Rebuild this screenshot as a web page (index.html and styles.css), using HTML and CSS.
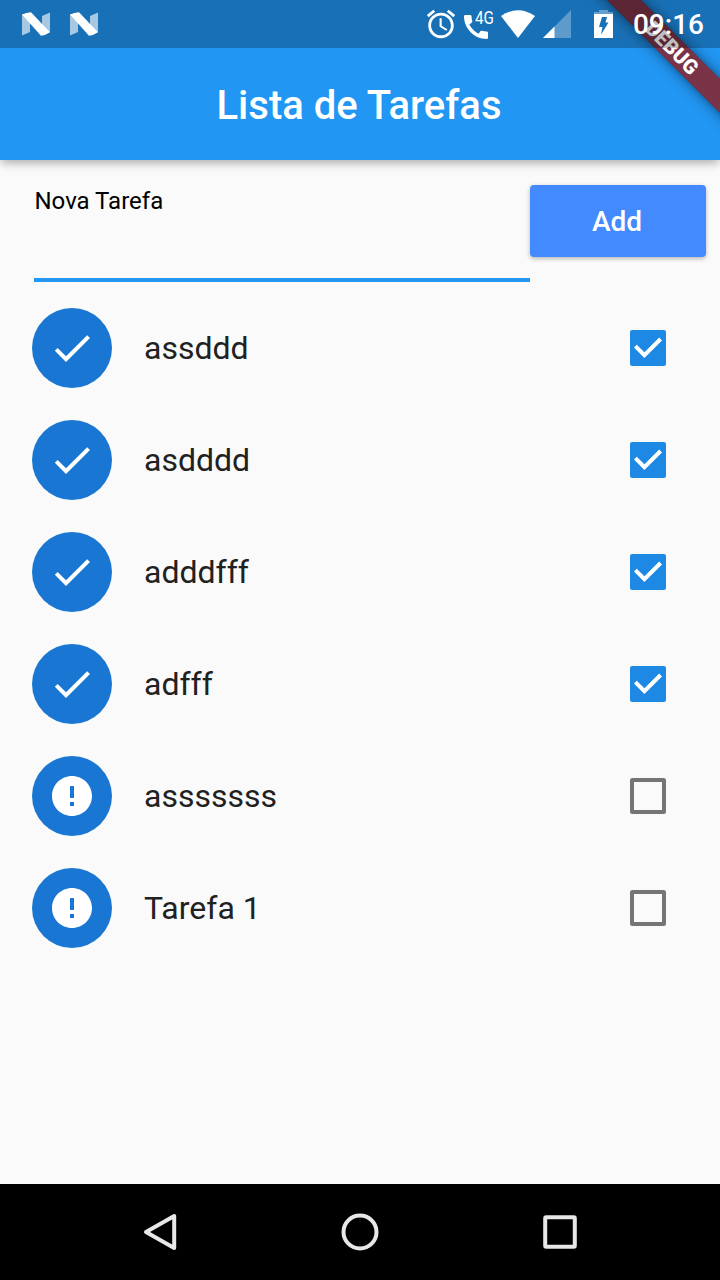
FILE: index.html
```html
<!DOCTYPE html>
<html lang="pt">
<head>
<meta charset="utf-8">
<title>Lista de Tarefas</title>
<link rel="stylesheet" href="styles.css">
</head>
<body>
<svg class="defs" width="0" height="0">
  <symbol id="check" viewBox="0 0 24 24"><path d="M9 16.17L4.83 12l-1.42 1.41L9 19 21 7l-1.41-1.41z"/></symbol>
  <symbol id="error" viewBox="0 0 24 24"><path d="M12 2C6.48 2 2 6.48 2 12s4.48 10 10 10 10-4.48 10-10S17.52 2 12 2zm1 15h-2v-2h2v2zm0-4h-2V7h2v6z"/></symbol>
  <symbol id="box-on" viewBox="0 0 36 36"><rect width="36" height="36" rx="2" fill="#1e88e5"/><path d="M5.4 16.2L14.4 25.2 30.6 9" fill="none" stroke="#fff" stroke-width="4"/></symbol>
  <symbol id="box-off" viewBox="0 0 36 36"><rect x="2" y="2" width="32" height="32" rx="0.5" fill="none" stroke="#757575" stroke-width="4"/></symbol>
  <symbol id="nougat" viewBox="0 0 28 24"><path d="M0 2L8 6V20L0 23.5zM20 4L28 .5V20L20 22z" fill="#fff" fill-opacity=".62"/><path d="M0 2.5Q4 .5 9 .2L28 20.2Q24 23 19 23.700z" fill="#fff"/></symbol>
</svg>
<div class="screen">
  <header class="top">
    <div class="status">
      <svg class="n-icon"><use href="#nougat"/></svg>
      <svg class="n-icon"><use href="#nougat"/></svg>
      <svg class="alarm" viewBox="0 0 24 24"><path d="M22 5.72l-4.6-3.86-1.29 1.53 4.6 3.86L22 5.72zM7.88 3.39L6.6 1.86 2 5.71l1.29 1.53 4.59-3.85zM12.5 8H11v6l4.75 2.85.75-1.23-4-2.37V8zM12 4c-4.97 0-9 4.03-9 9s4.02 9 9 9c4.97 0 9-4.03 9-9s-4.03-9-9-9zm0 16c-3.87 0-7-3.13-7-7s3.13-7 7-7 7 3.13 7 7-3.13 7-7 7z"/></svg>
      <div class="phone">
        <svg viewBox="3 3 18 18"><path d="M20.01 15.38c-1.23 0-2.42-.2-3.53-.56-.35-.12-.74-.03-1.01.24l-1.57 1.97c-2.83-1.35-5.48-3.9-6.89-6.83l1.95-1.66c.27-.28.35-.67.24-1.02-.37-1.11-.56-2.3-.56-3.53 0-.54-.45-.99-.99-.99H4.19C3.65 3 3 3.24 3 3.99 3 13.28 10.73 21 20.01 21c.71 0 .99-.63.99-1.18v-3.45c0-.54-.45-.99-.99-.99z"/></svg>
        <span class="network">4G</span>
      </div>
      <svg class="wifi" viewBox="0 0 34 28"><path d="M0 6Q17-5.5 34 6L17 28z"/></svg>
      <svg class="signal" viewBox="0 0 28 28"><path d="M28 0V28H0z" fill-opacity=".3"/><path d="M11.5 16.5V28H0z"/></svg>
      <svg class="battery" viewBox="0 0 19 28"><path d="M5 0h9v2h5v2H0V2h5z" fill-opacity=".35"/><path fill-rule="evenodd" d="M0 4H19V28H0zM8 7H13L11.500 12.500H14.500L7 24.700L8.500 17H5z"/></svg>
      <span class="clock">09:16</span>
    </div>
    <h1 class="title">Lista de Tarefas</h1>
  </header>
  <main class="content">
    <form class="entry">
      <label class="field">Nova Tarefa</label>
      <button class="add" type="button">Add</button>
    </form>
    <ul class="tasks">
      <li class="task"><span class="avatar"><svg><use href="#check"/></svg></span><span class="name">assddd</span><svg class="box"><use href="#box-on"/></svg></li>
      <li class="task"><span class="avatar"><svg><use href="#check"/></svg></span><span class="name">asdddd</span><svg class="box"><use href="#box-on"/></svg></li>
      <li class="task"><span class="avatar"><svg><use href="#check"/></svg></span><span class="name">adddfff</span><svg class="box"><use href="#box-on"/></svg></li>
      <li class="task"><span class="avatar"><svg><use href="#check"/></svg></span><span class="name">adfff</span><svg class="box"><use href="#box-on"/></svg></li>
      <li class="task"><span class="avatar"><svg><use href="#error"/></svg></span><span class="name">asssssss</span><svg class="box"><use href="#box-off"/></svg></li>
      <li class="task"><span class="avatar"><svg><use href="#error"/></svg></span><span class="name">Tarefa 1</span><svg class="box"><use href="#box-off"/></svg></li>
    </ul>
  </main>
  <nav class="nav">
    <svg viewBox="0 0 40 40"><path d="M6 20L34.200 4V36z"/></svg>
    <svg viewBox="0 0 40 40"><circle cx="20" cy="20" r="16.500"/></svg>
    <svg viewBox="0 0 40 40"><rect x="5.200" y="5.200" width="29.600" height="29.600" rx="1"/></svg>
  </nav>
  <div class="banner-clip"><div class="banner">DEBUG</div></div>
</div>
</body>
</html>
```

FILE: styles.css
```css
* { box-sizing: border-box; }
body { margin: 0; font-family: Roboto, sans-serif; }
svg { display: block; flex: none; }
.defs { position: absolute; }
.screen {
  position: relative;
  display: flex;
  flex-direction: column;
  width: 720px;
  height: 1280px;
  overflow: hidden;
  background: #fafafa;
}
.top {
  height: 160px;
  background: #2196f3;
  box-shadow: 0 4px 8px -2px rgba(0,0,0,.2), 0 8px 10px rgba(0,0,0,.05), 0 2px 10px rgba(0,0,0,.1);
}
/* The status bar scrim darkens the app, including the corner banner. */
.status {
  position: relative;
  z-index: 2;
  display: flex;
  align-items: center;
  height: 48px;
  padding: 0 16px 0 22px;
  background: rgba(0,0,0,.25);
  color: #fff;
  fill: #fff;
}
.n-icon { width: 28px; height: 24px; margin-right: 20px; }
.alarm { width: 34px; height: 34px; margin-left: auto; }
.phone { position: relative; width: 30px; height: 29px; margin-left: 6px; padding-top: 5px; }
.phone svg { width: 24px; height: 24px; }
.network {
  position: absolute;
  left: 11px;
  top: -2px;
  font-size: 19px;
  line-height: 19px;
  transform: scaleX(.8);
  transform-origin: left;
}
.wifi { width: 34px; height: 28px; margin-left: 7px; }
.signal { width: 28px; height: 28px; margin-left: 8px; }
.battery { width: 19px; height: 28px; margin-left: 23px; }
.clock { margin: 2px 0 0 20px; font-size: 28px; font-weight: 500; line-height: 32px; }
.title {
  margin: 0;
  padding: 2px 2px 0 0;
  color: #fff;
  font-size: 40px;
  font-weight: 500;
  line-height: 112px;
  text-align: center;
}
.content { flex: 1; padding-top: 24px; }
.entry { display: flex; align-items: flex-start; height: 108px; padding: 0 14px 0 34px; }
.field {
  flex: 1;
  height: 98px;
  padding: 3px 0 0 0.5px;
  border-bottom: 4px solid #2196f3;
  font-size: 24px;
  line-height: 28px;
}
.add {
  width: 176px;
  height: 72px;
  margin-top: 1px;
  padding: 2px 2px 0 0;
  border: 0;
  border-radius: 4px;
  background: #448aff;
  box-shadow: 0 2px 4px rgba(0,0,0,.2), 0 1px 6px rgba(0,0,0,.08);
  color: #fff;
  font: 500 28px/70px Roboto, sans-serif;
}
.tasks { margin: 0; padding: 0; list-style: none; }
.task { display: flex; align-items: center; height: 112px; padding: 0 54px 0 32px; }
.avatar {
  display: flex;
  align-items: center;
  justify-content: center;
  width: 80px;
  height: 80px;
  border-radius: 50%;
  background: #1976d2;
  fill: #fff;
}
.avatar svg { width: 48px; height: 48px; }
.name { flex: 1; margin-left: 32px; color: #212121; font-size: 32px; line-height: 38px; }
.box { width: 36px; height: 36px; }
.nav {
  display: flex;
  align-items: center;
  justify-content: center;
  gap: 160px;
  height: 96px;
  background: #000;
  fill: none;
  stroke: #e8e8e8;
  stroke-width: 4;
  stroke-linejoin: round;
}
.nav svg { width: 40px; height: 40px; }
.banner-clip { position: absolute; z-index: 1; top: 0; right: 0; width: 180px; height: 180px; overflow: hidden; }
.banner {
  position: absolute;
  left: 32px;
  top: 36px;
  width: 200px;
  height: 24px;
  background: linear-gradient(rgba(183,28,28,.627), rgba(183,28,28,.627)), rgba(0,0,0,.42);
  box-shadow: 0 0 14px rgba(0,0,0,.5);
  color: #fff;
  font-size: 20.4px;
  font-weight: 900;
  line-height: 24px;
  text-align: center;
  transform: rotate(45deg);
}
```
